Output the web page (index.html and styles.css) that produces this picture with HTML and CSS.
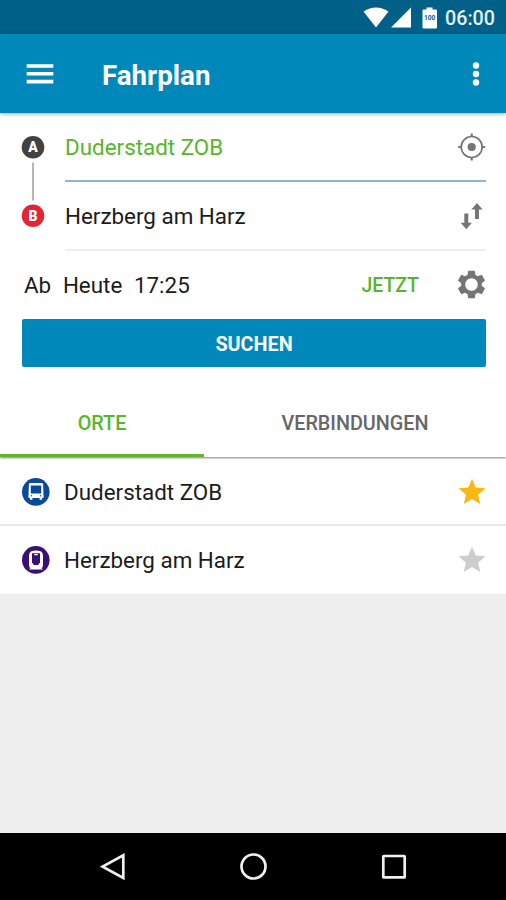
FILE: index.html
```html
<!DOCTYPE html>
<html lang="de">
<head>
    <meta charset="UTF-8">
    <meta name="viewport" content="width=device-width, initial-scale=1.0">
    <title>Fahrplan</title>
    <link rel="stylesheet" href="styles.css">
</head>
<body>
    <div class="screen">
        <div class="status-bar">
            <svg class="status-icons" width="76" height="22" viewBox="0 0 76 22">
                <path d="M0.5 4.5 Q13 -3.5 25.5 4.5 L13 20.5 Z"/>
                <path d="M48 0.5 V20.5 H28 Z"/>
                <path d="M63.5 0.5h6v2h3.5q1 0 1 1v17q0 1-1 1h-12.5q-1 0-1-1v-17q0-1 1-1h3z"/>
                <text x="66.7" y="13" class="battery-level">100</text>
            </svg>
            <span class="clock">06:00</span>
        </div>

        <header class="app-bar">
            <svg class="menu-icon" width="28" height="20" viewBox="0 0 28 20">
                <path d="M0.7 2h26.6M0.7 9.8h26.6M0.7 17.6h26.6"/>
            </svg>
            <h1 class="title">Fahrplan</h1>
            <svg class="more-icon" width="8" height="26" viewBox="0 0 8 26">
                <circle cx="4" cy="4.5" r="3.2"/>
                <circle cx="4" cy="13" r="3.2"/>
                <circle cx="4" cy="21.5" r="3.2"/>
            </svg>
        </header>

        <section class="search-form">
            <svg class="route-marks" width="24" height="96" viewBox="0 0 24 96">
                <path d="M12 28.5v38" class="route-line"/>
                <circle cx="12" cy="13.3" r="11.3" class="mark-a"/>
                <text x="12" y="18.3" class="mark-text">A</text>
                <circle cx="12" cy="81.7" r="11.3" class="mark-b"/>
                <text x="12" y="86.7" class="mark-text">B</text>
            </svg>
            <div class="stops">
                <div class="stop stop-from">
                    <span>Duderstadt ZOB</span>
                    <svg class="icon" width="28" height="28" viewBox="0 0 28 28">
                        <circle cx="13.7" cy="14" r="10.5" fill="none" stroke="#757575" stroke-width="1.7"/>
                        <circle cx="13.7" cy="14" r="4.1"/>
                        <path d="M12.6 0.5h2.2v3.5h-2.2zM12.6 24h2.2v3.5h-2.2zM0.2 12.9h3.5v2.2h-3.5zM23.7 12.9h3.5v2.2h-3.5z"/>
                    </svg>
                </div>
                <div class="stop stop-to">
                    <span>Herzberg am Harz</span>
                    <svg class="icon" width="28" height="28" viewBox="0 0 28 28">
                        <path d="M6.3 11.5h4v9.3h3.6L8.3 27.3 2.7 20.8H6.3z"/>
                        <path d="M17 17h4V7.5h3.6L19 1 13.4 7.5H17z"/>
                    </svg>
                </div>
            </div>
            <div class="time-row">
                <span class="time-mode">Ab</span>
                <span class="time-day">Heute</span>
                <span>17:25</span>
                <span class="now">JETZT</span>
                <svg class="icon settings" width="33" height="33" viewBox="0 0 24 24">
                    <path d="M19.43 12.98c.04-.32.07-.64.07-.98s-.03-.66-.07-.98l2.11-1.65c.19-.15.24-.42.12-.64l-2-3.46c-.12-.22-.39-.3-.61-.22l-2.49 1c-.52-.4-1.08-.73-1.69-.98l-.38-2.65C14.46 2.18 14.25 2 14 2h-4c-.25 0-.46.18-.49.42l-.38 2.65c-.61.25-1.17.59-1.69.98l-2.49-1c-.23-.09-.49 0-.61.22l-2 3.46c-.13.22-.07.49.12.64l2.11 1.65c-.04.32-.07.65-.07.98s.03.66.07.98l-2.11 1.65c-.19.15-.24.42-.12.64l2 3.46c.12.22.39.3.61.22l2.49-1c.52.4 1.08.73 1.69.98l.38 2.65c.03.24.24.42.49.42h4c.25 0 .46-.18.49-.42l.38-2.65c.61-.25 1.17-.59 1.69-.98l2.49 1c.23.09.49 0 .61-.22l2-3.46c.12-.22.07-.49-.12-.64l-2.11-1.65zM12 16.6a4.6 4.6 0 1 1 0-9.2 4.6 4.6 0 0 1 0 9.2z"/>
                </svg>
            </div>
            <button class="search-button">SUCHEN</button>
        </section>

        <nav class="tabs">
            <div class="tab active">ORTE</div>
            <div class="tab">VERBINDUNGEN</div>
        </nav>

        <ul class="places">
            <li class="place">
                <svg width="28" height="28" viewBox="0 0 28 28">
                    <circle cx="13.8" cy="13.9" r="13.8" fill="#0b4a9b"/>
                    <path fill="#fff" fill-rule="evenodd" d="M8.3 5h11.4q1.3 0 1.4 1.3l.5 13.7h-1.6v1.8h-2.4V20h-7.2v1.8H8V20H6.4l.5-13.7q.1-1.3 1.4-1.3zM8.8 7.4v8h10.4v-8z"/>
                    <circle cx="9.5" cy="17.8" r="0.7" fill="#0b4a9b"/>
                    <circle cx="18.5" cy="17.8" r="0.7" fill="#0b4a9b"/>
                </svg>
                <span class="place-name">Duderstadt ZOB</span>
                <svg class="star starred" width="32" height="32" viewBox="0 0 24 24">
                    <path d="M12 17.27L18.18 21l-1.64-7.03L22 9.24l-7.19-.61L12 2 9.19 8.63 2 9.24l5.46 4.73L5.82 21z"/>
                </svg>
            </li>
            <li class="place">
                <svg width="28" height="28" viewBox="0 0 28 28">
                    <circle cx="13.8" cy="13.9" r="13.8" fill="#3c0f73"/>
                    <path fill="#fff" d="M10 5q4-1.200 8 0q3 1 3 5v9q0 2.200-1.400 3.200l1.400 1.300H7l1.400-1.300Q7 21.200 7 19v-9q0-4 3-5z"/>
                    <path fill="#3c0f73" d="M10 7.300h8v9l-1.800 2.800h-4.400L10 16.300z"/>
                    <path fill="#fff" d="M12.3 8h3.400v1.200h-3.400z"/>
                </svg>
                <span class="place-name">Herzberg am Harz</span>
                <svg class="star" width="32" height="32" viewBox="0 0 24 24">
                    <path d="M12 17.27L18.18 21l-1.64-7.03L22 9.24l-7.19-.61L12 2 9.19 8.63 2 9.24l5.46 4.73L5.82 21z"/>
                </svg>
            </li>
        </ul>

        <footer class="nav-bar">
            <svg width="28" height="28" viewBox="0 0 28 28"><path d="M23.3 2.3v22.6L2.7 13.6z"/></svg>
            <svg width="28" height="28" viewBox="0 0 28 28"><circle cx="13.5" cy="13.5" r="12"/></svg>
            <svg width="28" height="28" viewBox="0 0 28 28"><rect x="3.3" y="3" width="21.4" height="21.4" rx="0.5"/></svg>
        </footer>
    </div>
</body>
</html>
```
FILE: styles.css
```css
* {
    box-sizing: border-box;
}

body, html {
    margin: 0;
    padding: 0;
    font-family: Roboto, sans-serif;
    color: #1c1c1c;
}

svg {
    display: block;
    flex-shrink: 0;
}

.screen {
    display: flex;
    flex-direction: column;
    width: 506px;
    height: 900px;
    background: #eeeeee;
    overflow: hidden;
}

/* Status bar */
.status-bar {
    display: flex;
    align-items: center;
    justify-content: flex-end;
    height: 34px;
    padding-right: 11px;
    background: #006088;
    color: #e4f1f6;
}

.status-icons {
    fill: #fff;
    margin: 1px 6px 0 0;
}

.battery-level {
    font-size: 6.5px;
    font-weight: 700;
    fill: #006088;
    text-anchor: middle;
}

.clock {
    font-size: 19.7px;
    font-weight: 500;
    line-height: 34px;
    padding-top: 3px;
}

/* App bar */
.app-bar {
    position: relative;
    display: flex;
    align-items: center;
    height: 79px;
    padding: 0 26px;
    background: #0088bb;
    box-shadow: 0 1px 4px rgba(0, 0, 0, 0.35);
    color: #fff;
}

.menu-icon {
    stroke: #fff;
    stroke-width: 3.6;
}

.title {
    flex: 1;
    margin: 3px 0 0 48px;
    font-size: 27.7px;
    font-weight: 700;
}

.more-icon {
    fill: #fff;
}

/* Search form */
.search-form {
    display: grid;
    grid-template-columns: 44px 1fr;
    padding: 0 20px 0 21px;
    height: 275px;
    background: #fff;
    align-content: start;
    font-size: 22.4px;
}

.route-marks {
    margin-top: 21px;
}

.route-line {
    stroke: #9e9e9e;
    stroke-width: 1.5;
}

.mark-a {
    fill: #424242;
}

.mark-b {
    fill: #e32636;
}

.mark-text {
    font-size: 14px;
    font-weight: 900;
    fill: #fff;
    text-anchor: middle;
}

.stop {
    display: flex;
    align-items: center;
    justify-content: space-between;
    height: 69px;
    border-bottom: 2px solid #eeeeee;
}

.stop-from {
    color: #57b52c;
    border-bottom-color: #94b3d3;
}

.icon {
    fill: #757575;
}

.time-row {
    grid-column: 1 / 3;
    display: flex;
    align-items: center;
    height: 68px;
    padding-left: 3px;
}

.time-mode,
.time-day {
    margin-right: 11.7px;
}

.now {
    margin: 1px 36px 0 auto;
    font-size: 19.5px;
    font-weight: 500;
    color: #57b52c;
}

.settings {
    margin: 0 -2px 2px 0;
}

.search-button {
    grid-column: 1 / 3;
    height: 48px;
    margin-left: 1px;
    padding: 2px 0 0;
    border: none;
    border-radius: 2px;
    background: #0088bb;
    color: #fff;
    font-family: inherit;
    font-size: 19.8px;
    font-weight: 700;
}

/* Tabs */
.tabs {
    position: relative;
    display: flex;
    height: 69px;
    background: #fff;
    box-shadow: 0 1px 2px rgba(0, 0, 0, 0.5);
    clip-path: inset(0 0 -6px 0); /* shadow only below */
}

.tab {
    flex: 1;
    padding-top: 3px;
    line-height: 66px;
    text-align: center;
    font-size: 19.8px;
    font-weight: 500;
    color: #666;
}

.tab.active {
    flex: 0 0 204px;
    color: #57b52c;
    border-bottom: 3px solid #62b32e;
}

/* Places */
.places {
    flex: 1;
    margin: 0;
    padding: 0;
    list-style: none;
}

.place {
    display: flex;
    align-items: center;
    height: 69px;
    padding: 1px 18px 0 22px;
    background: #fff;
    border-bottom: 2px solid #e8e8e8;
    font-size: 22.4px;
}

.place:first-child {
    padding-top: 2px;
}

.place:last-child {
    height: 68px;
    padding-top: 0;
    border-bottom: none;
}

.place-name {
    flex: 1;
    margin-left: 14px;
}

.star {
    fill: #cccccc;
}

.starred {
    fill: #fdb713;
}

/* Navigation bar */
.nav-bar {
    display: flex;
    align-items: center;
    justify-content: space-between;
    height: 67px;
    padding: 0 98px 0 100px;
    background: #000;
}

.nav-bar svg {
    fill: none;
    stroke: #f0f0f0;
    stroke-width: 2.7;
}
```
